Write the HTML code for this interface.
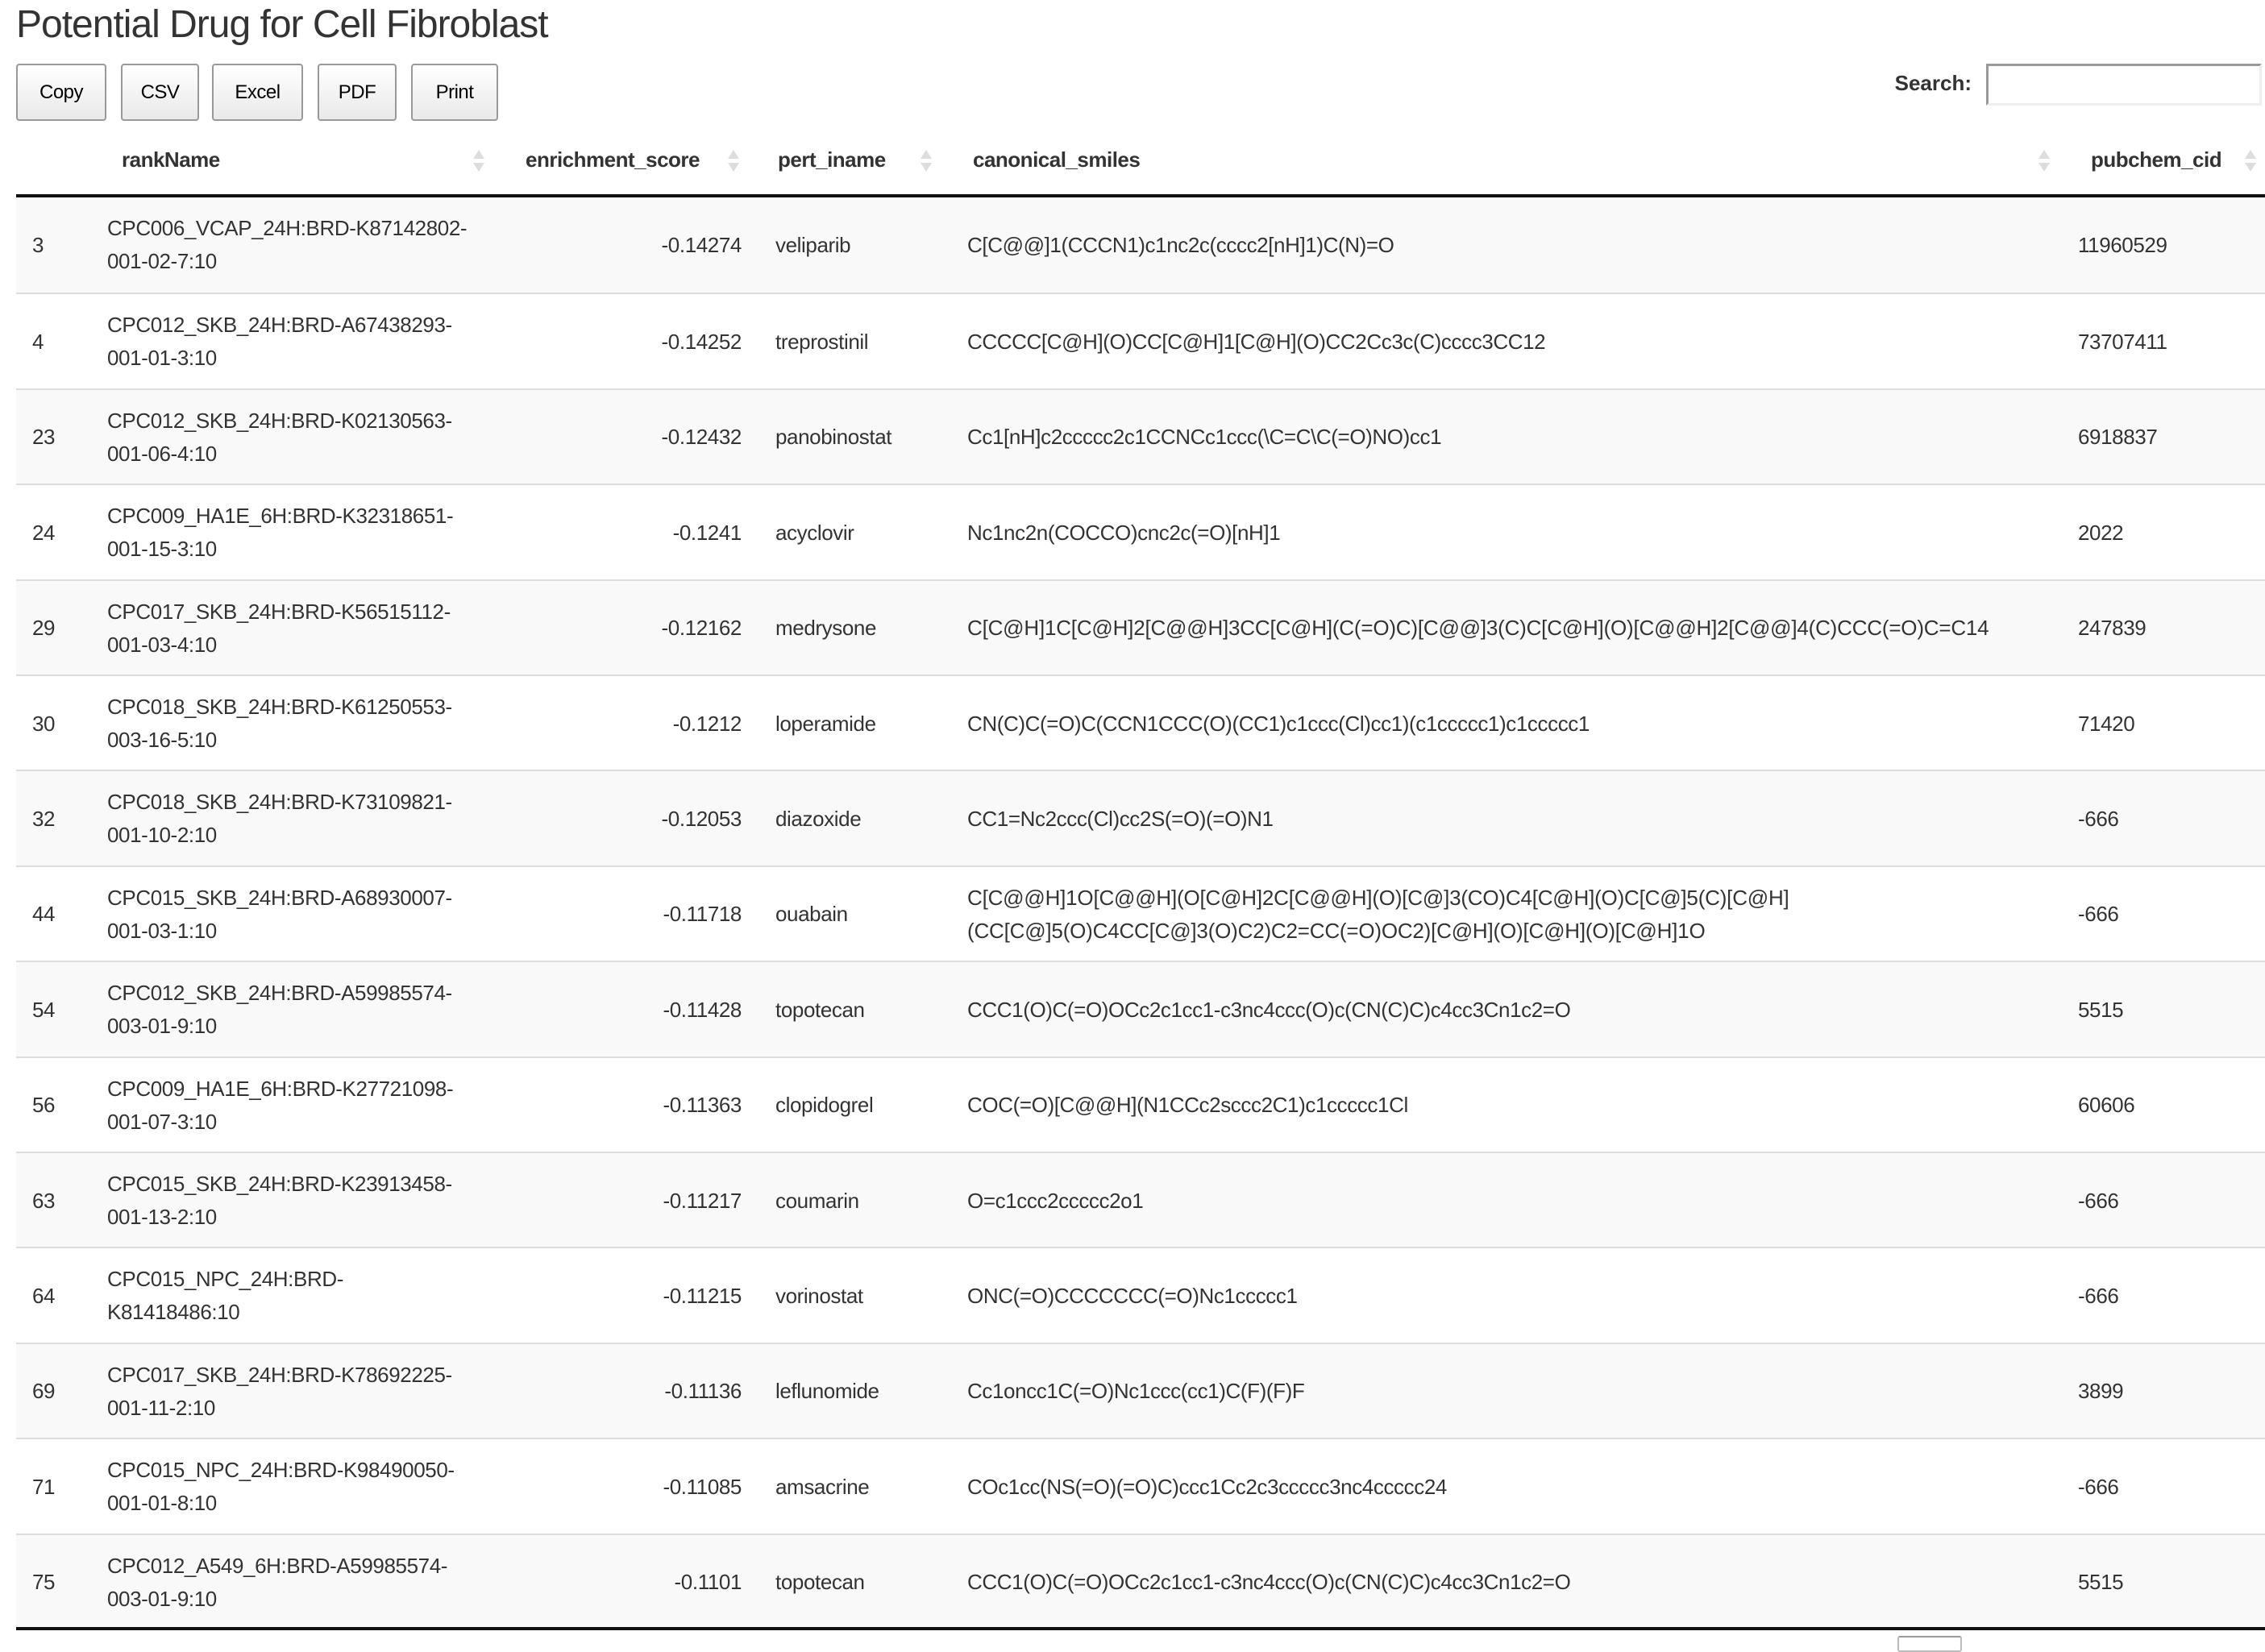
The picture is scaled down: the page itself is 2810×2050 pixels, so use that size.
<!DOCTYPE html>
<html><head><meta charset="utf-8"><style>
*{margin:0;padding:0;box-sizing:border-box}
body{width:2810px;height:2038px;background:#fff;font-family:"Liberation Sans",sans-serif;color:#333;position:relative;overflow:hidden}
.t{position:absolute;left:20px;top:3px;font-size:48px;color:#333;letter-spacing:-1px}
.b{position:absolute;top:79px;height:71px;border:2px solid #999;border-radius:4px;background:linear-gradient(#fff,#e9e9e9);font-size:24px;color:#000;display:flex;align-items:center;justify-content:center;letter-spacing:-0.5px}
.sl{position:absolute;left:2340px;top:88px;width:106px;font-size:26px;font-weight:bold;text-align:right}
.si{position:absolute;left:2464px;top:79px;width:342px;height:52px;border:3px solid #999;border-right-color:#eee;border-bottom-color:#eee}
.h{position:absolute;top:183px;font-size:26px;font-weight:bold;letter-spacing:-0.5px;white-space:nowrap}
.ic{position:absolute;top:186px;width:14px;height:30px}
.ic:before{content:"";position:absolute;left:0;top:0;border:7px solid transparent;border-bottom:11px solid #ddd;border-top:0}
.ic:after{content:"";position:absolute;left:0;top:16px;border:7px solid transparent;border-top:11px solid #ddd;border-bottom:0}
.hl{position:absolute;left:20px;top:241px;width:2790px;height:4px;background:#111}
.r{position:absolute;left:20px;width:2790px;height:118.4px;border-top:2px solid #ddd;font-size:26px;letter-spacing:-0.4px;line-height:41px}
.r.o{background:#f9f9f9}
.r.f{border-top:none}
.c{position:absolute;top:0;height:118px;display:flex;align-items:center;white-space:nowrap}
.bl{position:absolute;left:20px;top:2019px;width:2790px;height:4px;background:#111}
</style></head><body>
<div class="t">Potential Drug for Cell Fibroblast</div>
<div class="b" style="left:20px;width:112px">Copy</div>
<div class="b" style="left:150px;width:97px">CSV</div>
<div class="b" style="left:263px;width:113px">Excel</div>
<div class="b" style="left:394px;width:98px">PDF</div>
<div class="b" style="left:510px;width:108px">Print</div>
<div class="sl">Search:</div>
<div class="si"></div>
<div class="h" style="left:151px">rankName</div><div class="ic" style="left:587px"></div>
<div class="h" style="left:652px">enrichment_score</div><div class="ic" style="left:903px"></div>
<div class="h" style="left:965px">pert_iname</div><div class="ic" style="left:1142px"></div>
<div class="h" style="left:1207px">canonical_smiles</div><div class="ic" style="left:2529px"></div>
<div class="h" style="left:2594px">pubchem_cid</div><div class="ic" style="left:2785px"></div>
<div class="hl"></div>
<div class="r o f" style="top:245px"><div class="c" style="left:20px">3</div><div class="c" style="left:113px">CPC006_VCAP_24H:BRD-K87142802-<br>001-02-7:10</div><div class="c" style="left:600px;width:300px;justify-content:flex-end">-0.14274</div><div class="c" style="left:942px">veliparib</div><div class="c" style="left:1180px">C[C@@]1(CCCN1)c1nc2c(cccc2[nH]1)C(N)=O</div><div class="c" style="left:2558px">11960529</div></div>
<div class="r" style="top:363.4px"><div class="c" style="left:20px">4</div><div class="c" style="left:113px">CPC012_SKB_24H:BRD-A67438293-<br>001-01-3:10</div><div class="c" style="left:600px;width:300px;justify-content:flex-end">-0.14252</div><div class="c" style="left:942px">treprostinil</div><div class="c" style="left:1180px">CCCCC[C@H](O)CC[C@H]1[C@H](O)CC2Cc3c(C)cccc3CC12</div><div class="c" style="left:2558px">73707411</div></div>
<div class="r o" style="top:481.8px"><div class="c" style="left:20px">23</div><div class="c" style="left:113px">CPC012_SKB_24H:BRD-K02130563-<br>001-06-4:10</div><div class="c" style="left:600px;width:300px;justify-content:flex-end">-0.12432</div><div class="c" style="left:942px">panobinostat</div><div class="c" style="left:1180px">Cc1[nH]c2ccccc2c1CCNCc1ccc(\C=C\C(=O)NO)cc1</div><div class="c" style="left:2558px">6918837</div></div>
<div class="r" style="top:600.2px"><div class="c" style="left:20px">24</div><div class="c" style="left:113px">CPC009_HA1E_6H:BRD-K32318651-<br>001-15-3:10</div><div class="c" style="left:600px;width:300px;justify-content:flex-end">-0.1241</div><div class="c" style="left:942px">acyclovir</div><div class="c" style="left:1180px">Nc1nc2n(COCCO)cnc2c(=O)[nH]1</div><div class="c" style="left:2558px">2022</div></div>
<div class="r o" style="top:718.6px"><div class="c" style="left:20px">29</div><div class="c" style="left:113px">CPC017_SKB_24H:BRD-K56515112-<br>001-03-4:10</div><div class="c" style="left:600px;width:300px;justify-content:flex-end">-0.12162</div><div class="c" style="left:942px">medrysone</div><div class="c" style="left:1180px;letter-spacing:-0.2px">C[C@H]1C[C@H]2[C@@H]3CC[C@H](C(=O)C)[C@@]3(C)C[C@H](O)[C@@H]2[C@@]4(C)CCC(=O)C=C14</div><div class="c" style="left:2558px">247839</div></div>
<div class="r" style="top:837px"><div class="c" style="left:20px">30</div><div class="c" style="left:113px">CPC018_SKB_24H:BRD-K61250553-<br>003-16-5:10</div><div class="c" style="left:600px;width:300px;justify-content:flex-end">-0.1212</div><div class="c" style="left:942px">loperamide</div><div class="c" style="left:1180px">CN(C)C(=O)C(CCN1CCC(O)(CC1)c1ccc(Cl)cc1)(c1ccccc1)c1ccccc1</div><div class="c" style="left:2558px">71420</div></div>
<div class="r o" style="top:955.4px"><div class="c" style="left:20px">32</div><div class="c" style="left:113px">CPC018_SKB_24H:BRD-K73109821-<br>001-10-2:10</div><div class="c" style="left:600px;width:300px;justify-content:flex-end">-0.12053</div><div class="c" style="left:942px">diazoxide</div><div class="c" style="left:1180px">CC1=Nc2ccc(Cl)cc2S(=O)(=O)N1</div><div class="c" style="left:2558px">-666</div></div>
<div class="r" style="top:1073.8px"><div class="c" style="left:20px">44</div><div class="c" style="left:113px">CPC015_SKB_24H:BRD-A68930007-<br>001-03-1:10</div><div class="c" style="left:600px;width:300px;justify-content:flex-end">-0.11718</div><div class="c" style="left:942px">ouabain</div><div class="c" style="left:1180px;letter-spacing:-0.2px">C[C@@H]1O[C@@H](O[C@H]2C[C@@H](O)[C@]3(CO)C4[C@H](O)C[C@]5(C)[C@H]<br>(CC[C@]5(O)C4CC[C@]3(O)C2)C2=CC(=O)OC2)[C@H](O)[C@H](O)[C@H]1O</div><div class="c" style="left:2558px">-666</div></div>
<div class="r o" style="top:1192.2px"><div class="c" style="left:20px">54</div><div class="c" style="left:113px">CPC012_SKB_24H:BRD-A59985574-<br>003-01-9:10</div><div class="c" style="left:600px;width:300px;justify-content:flex-end">-0.11428</div><div class="c" style="left:942px">topotecan</div><div class="c" style="left:1180px">CCC1(O)C(=O)OCc2c1cc1-c3nc4ccc(O)c(CN(C)C)c4cc3Cn1c2=O</div><div class="c" style="left:2558px">5515</div></div>
<div class="r" style="top:1310.6px"><div class="c" style="left:20px">56</div><div class="c" style="left:113px">CPC009_HA1E_6H:BRD-K27721098-<br>001-07-3:10</div><div class="c" style="left:600px;width:300px;justify-content:flex-end">-0.11363</div><div class="c" style="left:942px">clopidogrel</div><div class="c" style="left:1180px">COC(=O)[C@@H](N1CCc2sccc2C1)c1ccccc1Cl</div><div class="c" style="left:2558px">60606</div></div>
<div class="r o" style="top:1429px"><div class="c" style="left:20px">63</div><div class="c" style="left:113px">CPC015_SKB_24H:BRD-K23913458-<br>001-13-2:10</div><div class="c" style="left:600px;width:300px;justify-content:flex-end">-0.11217</div><div class="c" style="left:942px">coumarin</div><div class="c" style="left:1180px">O=c1ccc2ccccc2o1</div><div class="c" style="left:2558px">-666</div></div>
<div class="r" style="top:1547.4px"><div class="c" style="left:20px">64</div><div class="c" style="left:113px">CPC015_NPC_24H:BRD-<br>K81418486:10</div><div class="c" style="left:600px;width:300px;justify-content:flex-end">-0.11215</div><div class="c" style="left:942px">vorinostat</div><div class="c" style="left:1180px">ONC(=O)CCCCCCC(=O)Nc1ccccc1</div><div class="c" style="left:2558px">-666</div></div>
<div class="r o" style="top:1665.8px"><div class="c" style="left:20px">69</div><div class="c" style="left:113px">CPC017_SKB_24H:BRD-K78692225-<br>001-11-2:10</div><div class="c" style="left:600px;width:300px;justify-content:flex-end">-0.11136</div><div class="c" style="left:942px">leflunomide</div><div class="c" style="left:1180px">Cc1oncc1C(=O)Nc1ccc(cc1)C(F)(F)F</div><div class="c" style="left:2558px">3899</div></div>
<div class="r" style="top:1784.2px"><div class="c" style="left:20px">71</div><div class="c" style="left:113px">CPC015_NPC_24H:BRD-K98490050-<br>001-01-8:10</div><div class="c" style="left:600px;width:300px;justify-content:flex-end">-0.11085</div><div class="c" style="left:942px">amsacrine</div><div class="c" style="left:1180px">COc1cc(NS(=O)(=O)C)ccc1Cc2c3ccccc3nc4ccccc24</div><div class="c" style="left:2558px">-666</div></div>
<div class="r o" style="top:1902.6px"><div class="c" style="left:20px">75</div><div class="c" style="left:113px">CPC012_A549_6H:BRD-A59985574-<br>003-01-9:10</div><div class="c" style="left:600px;width:300px;justify-content:flex-end">-0.1101</div><div class="c" style="left:942px">topotecan</div><div class="c" style="left:1180px">CCC1(O)C(=O)OCc2c1cc1-c3nc4ccc(O)c(CN(C)C)c4cc3Cn1c2=O</div><div class="c" style="left:2558px">5515</div></div>
<div class="bl"></div>
<div style="position:absolute;left:2354px;top:2030px;width:80px;height:20px;border:2px solid #bbb;border-top-color:#999;border-radius:3px;background:#fff"></div>
</body></html>
